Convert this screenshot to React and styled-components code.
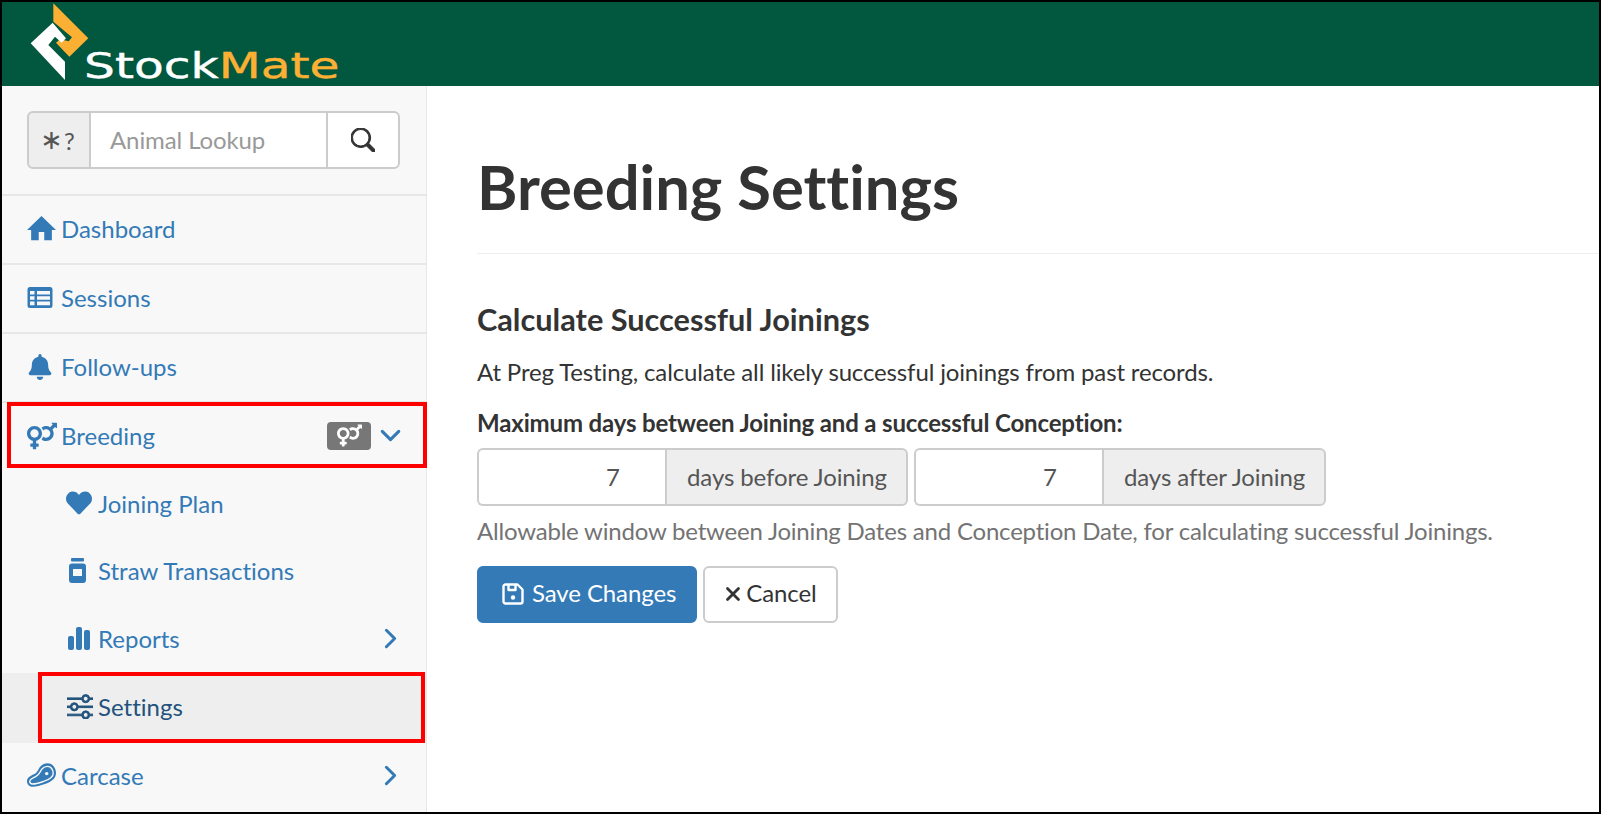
import React from 'react';
import styled, { createGlobalStyle } from 'styled-components';
import { FaBell, FaVenusMars, FaHeart } from 'react-icons/fa';
import { BsSearch, BsSliders } from 'react-icons/bs';
import { ChevronDown, ChevronRight, X } from 'lucide-react';

const Global = createGlobalStyle`
  html, body { margin: 0; padding: 0; height: 100%; overflow: hidden; background: #fff; }
  * { box-sizing: border-box; }
  body { font-family: Lato, "Open Sans", sans-serif; font-size: 24px; color: #333; font-variant-ligatures: none; }
`;

const Frame = styled.div`
  width: 1601px; height: 814px; border: 2px solid #000; display: flex; flex-direction: column; overflow: hidden; background: #fff;
`;
const Header = styled.header`
  height: 84px; flex: none; background: #02573f; padding-left: 28px; display: flex; align-items: flex-start;
`;
const Wordmark = styled.div`
  margin: 47px 0 0 -6px; font-family: "DejaVu Sans", sans-serif; font-size: 35px; line-height: 34px; font-weight: 400;
  color: #fff; transform: scaleX(1.39); transform-origin: left center; -webkit-text-stroke: .4px currentColor;
`;
const Mate = styled.span` color: #fbb034; `;
const Body = styled.div` flex: 1; display: flex; min-height: 0; `;
const Sidebar = styled.aside`
  width: 425px; flex: none; background: #f8f8f8; border-right: 1px solid #e7e7e7;
`;
const SearchArea = styled.div`
  height: 110px; padding: 25px 0 0 25px; border-bottom: 2px solid #e7e7e7;
`;
const SearchGroup = styled.div` display: flex; width: 373px; height: 58px; `;
const Prefix = styled.div`
  width: 63px; background: #eee; border: 2px solid #ccc; border-right: 1px solid #ccc; border-radius: 6px 0 0 6px; color: #555;
  display: flex; align-items: center; justify-content: center; gap: 1px; font-size: 24px; padding-right: 3px;
`;
const Star = styled.span` font-size: 27px; line-height: 24px; font-weight: 400; font-family: "DejaVu Sans", sans-serif; `;
const SearchInput = styled.div`
  width: 237px; background: #fff; border: 2px solid #ccc; border-width: 2px 1px 2px 1px; color: #999; padding: 0 19px 2px; display: flex; align-items: center; letter-spacing: -0.1px;
`;
const SearchButton = styled.div`
  width: 73px; background: #fff; border: 2px solid #ccc; border-left: 1px solid #ccc; border-radius: 0 6px 6px 0; color: #333;
  display: flex; align-items: center; justify-content: center; font-size: 24px;
`;
const Row = styled.div`
  position: relative; display: flex; align-items: center; height: ${p => p.$h || 68}px;
  border-bottom: ${p => p.$line ? '2px solid #e7e7e7' : 'none'};
  padding: 0 25px ${p => p.$lift || 2}px ${p => p.$sub ? 63 : 25}px;
  color: ${p => p.$active ? '#23527c' : '#337ab7'};
  background: ${p => p.$active ? '#eee' : 'transparent'};
`;
const IconSlot = styled.span`
  width: ${p => p.$sub ? 33 : 34}px; flex: none; display: flex; align-items: center; justify-content: flex-start; font-size: 26px;
  padding-left: ${p => p.$nudge || 0}px;
`;
const Label = styled.span` flex: 1; `;
const Badge = styled.span`
  width: 44px; height: 28px; border-radius: 4px; background: #777; color: #fff; display: flex; align-items: center; justify-content: center; font-size: 25px; margin-right: 9px;
`;
const Chevron = styled.span`
  width: 20px; height: 20px; display: flex; justify-content: center; align-items: center; margin-right: 1px;
  svg { flex: none; }
`;
const RedBox = styled.span`
  position: absolute; border: 4px solid #f00; pointer-events: none;
  left: ${p => p.$left}px; right: ${p => p.$right}px; top: ${p => p.$top}px; bottom: ${p => p.$bottom}px;
`;
const Main = styled.main` flex: 1; padding: 0 0 0 50px; `;
const Title = styled.h1`
  margin: 0; padding-top: 58px; height: 168px; font-size: 61.500px; line-height: 84px; font-weight: 700; color: #333; border-bottom: 1px solid #eee;
`;
const Sub = styled.h3` margin: 45px 0 0; font-size: 30.700px; line-height: 42px; font-weight: 700; color: #333; `;
const Para = styled.p` margin: 14px 0 0; line-height: 34px; letter-spacing: -0.14px; `;
const FieldLabel = styled.div` margin-top: 17px; font-weight: 700; line-height: 34px; letter-spacing: -0.15px; `;
const Inputs = styled.div` display: flex; gap: 6px; margin-top: 8px; `;
const InputGroup = styled.div` display: flex; height: 58px; `;
const NumberBox = styled.div`
  width: 188px; background: #fff; border: 2px solid #ccc; border-right: none; border-radius: 6px 0 0 6px; color: #555;
  display: flex; align-items: center; justify-content: flex-end; padding: 0 45px 2px 0;
`;
const Addon = styled.div`
  background: #eee; border: 2px solid #ccc; border-radius: 0 6px 6px 0; color: #555; padding: 0 19px 2px 20px; display: flex; align-items: center; white-space: nowrap; letter-spacing: -0.1px;
`;
const Help = styled.div` margin-top: 8px; color: #737373; line-height: 34px; letter-spacing: -0.2px; `;
const Actions = styled.div` display: flex; gap: 6px; margin-top: 18px; `;
const Button = styled.div`
  height: 57px; padding: 0 ${p => p.$primary ? 19 : 19}px 4px ${p => p.$primary ? 23 : 20}px; border-radius: 6px; display: flex; align-items: center; gap: ${p => p.$primary ? 8 : 5}px;
  background: ${p => p.$primary ? '#337ab7' : '#fff'}; color: ${p => p.$primary ? '#fff' : '#333'};
  border: 2px solid ${p => p.$primary ? '#337ab7' : '#ccc'}; letter-spacing: -0.1px;
  svg { flex: none; margin-top: 3px; }
`;
const CloseIcon = styled(X)` margin: 3px -3px 0 -3px; `;

const Logo = () => (
  <svg width="60" height="79" viewBox="30 6 180 237">
    <path d="M100 10 L205 115 L148 170 L108 128 L120 118 L146 124 L156 112 L100 65 Z" fill="#fbb034" />
    <path d="M98 68 L32 130 L135 240 L135 185 L85 135 L105 110 L125 128 L138 115 Z" fill="#fff" />
  </svg>
);
const Home = () => (
  <svg width="29" height="25" viewBox="0 0 84 72" fill="currentColor">
    <path d="M42 0 L84 40 L72 40 L72 70 L50 70 L50 46 L34 46 L34 70 L12 70 L12 40 L0 40 Z" />
  </svg>
);
const TableList = () => (
  <svg width="26" height="23" viewBox="0 0 26 23" fill="currentColor">
    <path fillRule="evenodd" d="M3 1h20a2.5 2.5 0 0 1 2.5 2.5v16A2.5 2.5 0 0 1 23 22H3a2.5 2.5 0 0 1-2.5-2.5v-16A2.5 2.5 0 0 1 3 1zM3 5v3.5h4.5V5H3zm7 0v3.5h13V5H10zM3 10.3v3.5h4.5v-3.500H3zm7 0v3.5h13v-3.500H10zM3 15.6v3.6h4.500v-3.600H3zm7 0v3.6h13v-3.600H10z" />
  </svg>
);
const Bottle = () => (
  <svg width="17" height="25" viewBox="0 0 17 25" fill="currentColor">
    <rect x="2" y="0" width="13" height="3.5" rx="1" />
    <path fillRule="evenodd" d="M3 5.5h11a3 3 0 0 1 3 3V22a3 3 0 0 1-3 3H3a3 3 0 0 1-3-3V8.500a3 3 0 0 1 3-3zM4 11v7h9v-7H4z" />
  </svg>
);
const Bars = () => (
  <svg width="22" height="23" viewBox="0 0 22 23" fill="currentColor">
    <rect x="0" y="9" width="6" height="14" rx="2" />
    <rect x="8" y="0" width="6" height="23" rx="2" />
    <rect x="16" y="3" width="6" height="20" rx="2" />
  </svg>
);
const Steak = () => (
  <svg width="29" height="24" viewBox="0 0 84 68">
    <path fill="currentColor" d="M60 0C74 0 84 14 84 28C84 44 70 54 52 60C38 64 28 68 16 68C6 68 0 60 0 52C0 42 10 36 20 32C30 28 32 18 38 10C44 3 52 0 60 0Z" />
    <path fill="none" stroke="#f8f8f8" strokeWidth="4" d="M60 9C69 9 76 19 76 29C76 40 65 47 50 52C38 56 28 60 16 60C10 60 8 56 8 52C8 46 17 43 26 38C36 33 38 23 44 16C48 11 54 9 60 9Z" />
    <circle cx="57" cy="30" r="5" fill="#f8f8f8" />
  </svg>
);
const Floppy = () => (
  <svg width="22" height="22" viewBox="0 0 22 22" fill="none" stroke="currentColor" strokeWidth="2.4" strokeLinejoin="round">
    <path d="M3.500 1.500H15.500L20.500 6.500V18.500a2 2 0 0 1-2 2H3.500a2 2 0 0 1-2-2V3.500a2 2 0 0 1 2-2z" />
    <path d="M6.500 2v5h7V2" />
    <circle cx="11" cy="14.500" r="2.200" fill="currentColor" stroke="none" />
  </svg>
);

export default function App() {
  return (
    <Frame>
      <Global />
      <Header>
        <Logo />
        <Wordmark>Stock<Mate>Mate</Mate></Wordmark>
      </Header>
      <Body>
        <Sidebar>
          <SearchArea>
            <SearchGroup>
              <Prefix><Star>∗</Star><span>?</span></Prefix>
              <SearchInput>Animal Lookup</SearchInput>
              <SearchButton><BsSearch stroke="currentColor" strokeWidth="0.7" /></SearchButton>
            </SearchGroup>
          </SearchArea>
          <Row $line $h={69}><IconSlot><Home /></IconSlot><Label>Dashboard</Label></Row>
          <Row $line $h={69}><IconSlot><TableList /></IconSlot><Label>Sessions</Label></Row>
          <Row $line $h={69}><IconSlot><FaBell /></IconSlot><Label>Follow-ups</Label></Row>
          <Row $h={67}>
            <IconSlot><FaVenusMars size={30} /></IconSlot><Label>Breeding</Label>
            <Badge><FaVenusMars /></Badge>
            <Chevron><ChevronDown size={33} strokeWidth={2.200} /></Chevron>
            <RedBox $left={5} $right={-1} $top={-1} $bottom={2} />
          </Row>
          <Row $sub><IconSlot $sub $nudge={1}><FaHeart /></IconSlot><Label>Joining Plan</Label></Row>
          <Row $sub $h={67}><IconSlot $sub $nudge={4}><Bottle /></IconSlot><Label>Straw Transactions</Label></Row>
          <Row $sub><IconSlot $sub $nudge={3}><Bars /></IconSlot><Label>Reports</Label><Chevron><ChevronRight size={33} strokeWidth={2.200} /></Chevron></Row>
          <Row $sub $active $h={70} $lift={4}>
            <IconSlot $sub $nudge={2}><BsSliders stroke="currentColor" strokeWidth="0.6" /></IconSlot><Label>Settings</Label>
            <RedBox $left={36} $right={1} $top={-1} $bottom={0} />
          </Row>
          <Row $h={68} $lift={4}><IconSlot><Steak /></IconSlot><Label>Carcase</Label><Chevron><ChevronRight size={33} strokeWidth={2.200} /></Chevron></Row>
        </Sidebar>
        <Main>
          <Title>Breeding Settings</Title>
          <Sub>Calculate Successful Joinings</Sub>
          <Para>At Preg Testing, calculate all likely successful joinings from past records.</Para>
          <FieldLabel>Maximum days between Joining and a successful Conception:</FieldLabel>
          <Inputs>
            <InputGroup><NumberBox>7</NumberBox><Addon>days before Joining</Addon></InputGroup>
            <InputGroup><NumberBox>7</NumberBox><Addon>days after Joining</Addon></InputGroup>
          </Inputs>
          <Help>Allowable window between Joining Dates and Conception Date, for calculating successful Joinings.</Help>
          <Actions>
            <Button $primary><Floppy />Save Changes</Button>
            <Button><CloseIcon size={22} strokeWidth={3} />Cancel</Button>
          </Actions>
        </Main>
      </Body>
    </Frame>
  );
}
